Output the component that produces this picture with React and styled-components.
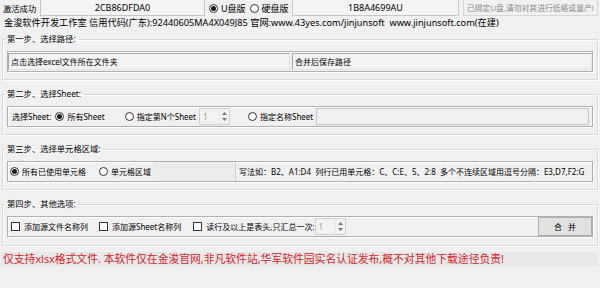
import React from 'react';
import styled, { createGlobalStyle } from 'styled-components';

const Global = createGlobalStyle`
  html, body { margin: 0; padding: 0; background: #f0f0f0; }
  body { font-family: "Noto Sans", "Noto Sans CJK SC", sans-serif; font-size: 8px; color: #000; }
  * { box-sizing: border-box; }
`;

const Window = styled.div`
  width: 600px;
  height: 288px;
  overflow: hidden;
  background: #f0f0f0;
  display: flex;
  flex-direction: column;
`;

const TopBar = styled.div`
  display: flex;
  align-items: stretch;
  height: 16px;
  font-size: 9px;
`;

const StatusLabel = styled.div`
  width: 40px;
  padding-left: 3px;
  display: flex;
  align-items: center;
  white-space: nowrap;
  font-size: 8.3px;
`;

const CodeBox = styled.div`
  width: ${p => p.$w}px;
  border: 1px solid #c6c6c6;
  border-top: none;
  background: #f4f4f4;
  display: flex;
  align-items: center;
  justify-content: center;
  white-space: nowrap;
`;

const ModeGroup = styled.div`
  width: 87px;
  display: flex;
  align-items: center;
  gap: 4px;
  padding-left: 4px;
`;

const NoticeBox = styled.div`
  margin-left: 4px;
  flex: 1;
  margin-right: 2px;
  border: 1px solid #d6d6d6;
  border-top: none;
  color: #8c8c8c;
  display: flex;
  align-items: center;
  padding-left: 3px;
  white-space: nowrap;
  overflow: hidden;
  font-size: 7.8px;
`;

const InfoLine = styled.div`
  height: 14px;
  line-height: 14px;
  padding-left: 4px;
  white-space: nowrap;
  font-size: 9.2px;
`;

const Group = styled.fieldset`
  margin: ${p => (p.$first ? '3px' : '8px')} 2px 0 2px;
  padding: 6px 4px ${p => p.$pb || 7}px 4px;
  border: 1px solid #d9d9d9;
  box-shadow: 1px 1px 0 #fff, inset 1px 1px 0 #fff;
  min-width: 0;
`;

const Legend = styled.legend`
  padding: 0 2px;
  margin-left: -2px;
  line-height: 12px;
  font-size: 8.3px;
`;

const Panel = styled.div`
  display: flex;
  align-items: center;
  height: 21px;
  border: 1px solid #b0b0b0;
  box-shadow: inset 1px 1px 0 #fff, 1px 1px 0 #fff;
  padding: ${p => p.$pad || '0 3px 0 4px'};
  gap: ${p => p.$gap || 0}px;
  white-space: nowrap;
`;

const PathField = styled.div`
  height: 17px;
  width: ${p => (p.$w ? `${p.$w}px` : 'auto')};
  flex: ${p => (p.$w ? 'none' : 1)};
  border: 1px solid #a8a8a8;
  border-right-color: #e2e2e2;
  border-bottom-color: #e2e2e2;
  background: #f2f2f2;
  display: flex;
  align-items: center;
  padding-left: 2px;
`;

const FieldLabel = styled.span`
  margin-right: 4px;
`;

const Option = styled.label`
  display: inline-flex;
  align-items: center;
  gap: ${p => p.$gap || 3}px;
  margin-left: ${p => p.$ml || 0}px;
  white-space: nowrap;
`;

const RadioCircle = styled.span`
  width: 9px;
  height: 9px;
  border-radius: 50%;
  border: 1px solid #333;
  background: #fff;
  display: inline-flex;
  align-items: center;
  justify-content: center;
  flex: none;
  &::after {
    content: '';
    width: 5px;
    height: 5px;
    border-radius: 50%;
    background: ${p => (p.$on ? '#1a1a1a' : 'transparent')};
  }
`;

const CheckBox = styled.span`
  width: 9px;
  height: 9px;
  border: 1px solid #333;
  background: #fff;
  flex: none;
`;

const Spin = styled.div`
  display: flex;
  align-items: stretch;
  width: ${p => p.$w || 31}px;
  height: 17px;
  margin-left: ${p => p.$ml || 0}px;
  border: 1px solid #cfcfcf;
  background: #f2f2f2;
  color: #9a9a9a;
`;

const SpinValue = styled.span`
  flex: 1;
  display: flex;
  align-items: center;
  padding-left: 3px;
`;

const SpinArrows = styled.span`
  width: 10px;
  display: flex;
  flex-direction: column;
  align-items: center;
  justify-content: center;
  gap: 3px;
  border-left: 1px solid #e4e4e4;
`;

const Fill = styled.div`
  flex: 1;
  height: 17px;
  margin-left: ${p => p.$ml || 0}px;
  border: 1px solid #c8c8c8;
  background: #f0f0f0;
`;

const AreaField = styled.div`
  width: 83px;
  align-self: stretch;
  margin-left: 2px;
  background: #ececec;
  border-right: 1px solid #d0d0d0;
`;

const Hint = styled.div`
  flex: 1;
  overflow: hidden;
  white-space: nowrap;
  padding-left: 3px;
`;

const Spacer = styled.div`
  flex: 1;
`;

const MergeButton = styled.button`
  width: 54px;
  height: 19px;
  border: 1px solid #adadad;
  background: #e1e1e1;
  font-family: inherit;
  font-size: 8px;
  letter-spacing: 2px;
  text-indent: 2px;
  padding: 0;
  color: #000;
`;

const Warning = styled.div`
  margin: 6px 2px 0 0;
  height: 14px;
  line-height: 14px;
  background: #e8e8e8;
  color: #d0262b;
  font-size: 10.8px;
  padding-left: 3px;
  white-space: nowrap;
`;

const Arrow = ({ up }) => (
  <svg width="5" height="3" viewBox="0 0 5 3">
    <path d={up ? 'M0 3 L2.5 0 L5 3 Z' : 'M0 0 L2.5 3 L5 0 Z'} fill="#777" />
  </svg>
);

const Spinner = ({ w, ml }) => (
  <Spin $w={w} $ml={ml}>
    <SpinValue>1</SpinValue>
    <SpinArrows>
      <Arrow up />
      <Arrow />
    </SpinArrows>
  </Spin>
);

const Radio = ({ on, children, ml, gap }) => (
  <Option $ml={ml} $gap={gap}>
    <RadioCircle $on={on} />
    {children}
  </Option>
);

const Check = ({ children, ml }) => (
  <Option $ml={ml} $gap={4}>
    <CheckBox />
    {children}
  </Option>
);

export default function App() {
  return (
    <Window>
      <Global />
      <TopBar>
        <StatusLabel>激活成功</StatusLabel>
        <CodeBox $w={165}>2CB86DFDA0</CodeBox>
        <ModeGroup>
          <Radio on>U盘版</Radio>
          <Radio>硬盘版</Radio>
        </ModeGroup>
        <CodeBox $w={167}>1B8A4699AU</CodeBox>
        <NoticeBox>已绑定U盘,请勿对其进行低格或量产!</NoticeBox>
      </TopBar>
      <InfoLine>
        金浚软件开发工作室 信用代码(广东):92440605MA4X049J85 官网:www.43yes.com/jinjunsoft&nbsp;&nbsp;www.jinjunsoft.com(在建)
      </InfoLine>

      <Group $first>
        <Legend>第一步、选择路径:</Legend>
        <Panel $pad="0 0 0 0" $gap={2}>
          <PathField $w={282}>点击选择excel文件所在文件夹</PathField>
          <PathField>合并后保存路径</PathField>
        </Panel>
      </Group>

      <Group>
        <Legend>第二步、选择Sheet:</Legend>
        <Panel>
          <FieldLabel>选择Sheet:</FieldLabel>
          <Radio on>所有Sheet</Radio>
          <Radio ml={20}>指定第N个Sheet</Radio>
          <Spinner ml={3} />
          <Radio ml={18}>指定名称Sheet</Radio>
          <Fill $ml={3} />
        </Panel>
      </Group>

      <Group>
        <Legend>第三步、选择单元格区域:</Legend>
        <Panel $pad="0 0 0 2px">
          <Radio on>所有已使用单元格</Radio>
          <Radio ml={13}>单元格区域</Radio>
          <AreaField />
          <Hint>写法如：B2、A1:D4&nbsp;&nbsp;列行已用单元格：C、C:E、5、2:8&nbsp;&nbsp;多个不连续区域用逗号分隔：E3,D7,F2:G</Hint>
        </Panel>
      </Group>

      <Group $pb={8}>
        <Legend>第四步、其他选项:</Legend>
        <Panel $pad="0 0 0 3px">
          <Check>添加源文件名称列</Check>
          <Check ml={11}>添加源Sheet名称列</Check>
          <Check ml={12}>读行及以上是表头,只汇总一次:</Check>
          <Spinner />
          <Spacer />
          <MergeButton>合 并</MergeButton>
        </Panel>
      </Group>

      <Warning>仅支持xlsx格式文件. 本软件仅在金浚官网,非凡软件站,华军软件园实名认证发布,概不对其他下载途径负责!</Warning>
    </Window>
  );
}
